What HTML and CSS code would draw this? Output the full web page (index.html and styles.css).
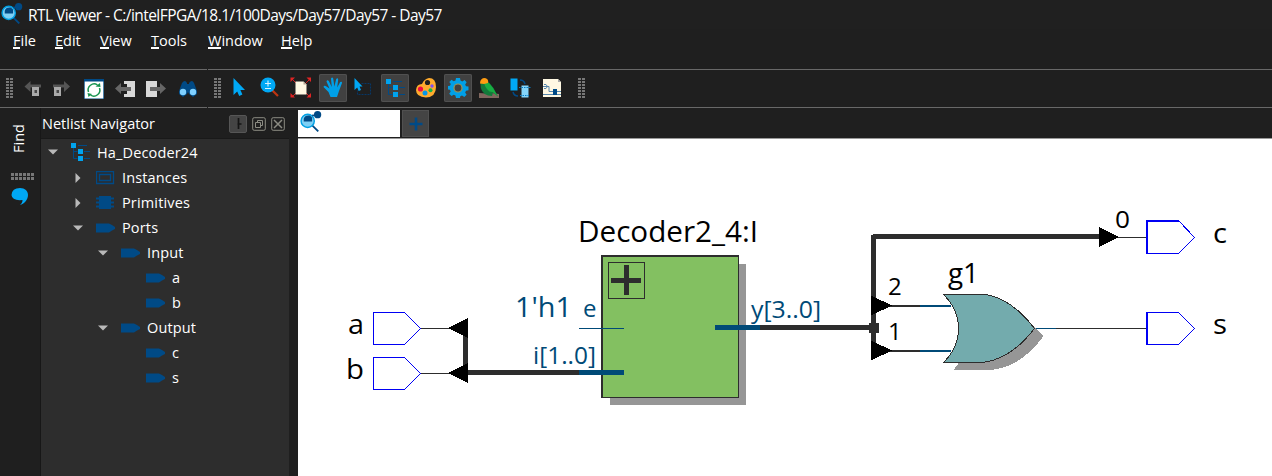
FILE: index.html
```
<!DOCTYPE html>
<html lang="en">
<head>
<meta charset="utf-8">
<title>RTL Viewer</title>
<link rel="stylesheet" href="styles.css">
</head>
<body>
<svg class="defs" width="0" height="0">
  <defs>
    <symbol id="viewer" viewBox="0 0 20 20">
      <path d="M11.5 13.5l4.500 4.500" stroke="#004a86" stroke-width="1.700" stroke-linecap="square"/>
      <circle cx="7" cy="9" r="6" fill="#7fd0f5" stroke="#00a0e4" stroke-width="1.300"/>
      <path d="M3.400 9.600V7q1-3 4-3h1.600l2 2v3.600z" fill="#004a86"/>
      <path d="M11 4h4" stroke="#004a86" stroke-width="1.500"/>
      <circle cx="16" cy="3.400" r="3.300" fill="#004a86"/>
    </symbol>
    <symbol id="port" viewBox="0 0 20 10"><path d="M0 .5h13l3 1.500 3 2v2l-3 1.500-3 2H0z" fill="#004a86"/></symbol>
    <symbol id="tree" viewBox="0 0 20 18">
      <path d="M2.500 5v10.500h4M2.500 8.500h4M7 2.500h9M13 8.500h6M13 15.500h6" fill="none" stroke="#004a86"/>
      <path d="M0 0h5v5H0zM7 6h5v5H7zM7 13h5v5H7z" fill="#00a3ee"/>
    </symbol>
    <symbol id="down" viewBox="0 0 10 6"><path d="M0 .5h10L5 5.500z" fill="#b9b9b9"/></symbol>
    <symbol id="right" viewBox="0 0 6 10"><path d="M.5 0v10l5-5z" fill="#b9b9b9"/></symbol>
  </defs>
</svg>
<div class="app">
  <header class="titlebar">
    <svg class="logo" width="22" height="22"><use href="#viewer"/></svg>
    <span class="title">RTL Viewer - C:/intelFPGA/18.1/100Days/Day57/Day57 - Day57</span>
  </header>
  <nav class="menu">
    <span class="m-file"><u>F</u>ile</span><span class="m-edit"><u>E</u>dit</span><span class="m-view"><u>V</u>iew</span><span class="m-tools"><u>T</u>ools</span><span class="m-window"><u>W</u>indow</span><span class="m-help"><u>H</u>elp</span>
  </nav>
  <div class="toolbar">
    <div class="bar nav-bar">
      <i class="grip"></i>
      <div class="nav-icons">
        <svg width="20" height="20" viewBox="0 0 20 20"><path d="M.5 7.500l6-5.500v3.500H17v3H6.500V13z" fill="#555"/><path d="M8 8h7v9H8z" fill="#aaa"/><path d="M10.500 11h2.500v3h-2.500z" fill="#484848"/></svg>
        <svg width="20" height="20" viewBox="0 0 20 20"><path d="M18 7.500L12 2v3.500H1v3h11V13z" fill="#555"/><path d="M2 8h7v9H2z" fill="#aaa"/><path d="M4.500 11H7v3H4.500z" fill="#484848"/></svg>
        <svg width="20" height="20" viewBox="0 0 20 20"><path d="M0 0h20v20H0z" fill="#004a86"/><path d="M.7 2.500h18.600v17H.7z" fill="#fff"/><path d="M4.500 13a6 6 0 0 1 9-7M15.500 9a6 6 0 0 1-9 7" fill="none" stroke="#17934f" stroke-width="1.500"/><path d="M11.500 7.500l5 .5-.5-4zM3.500 14l1 4 3.500-3z" fill="#17934f"/></svg>
        <svg width="20" height="20" viewBox="0 0 20 20"><path d="M9 2h11v16H9v-3h3V5H9z" fill="#d8d8d8"/><path d="M0 9.500L6 4v4h10v4H6v3z" fill="#666"/></svg>
        <svg width="20" height="20" viewBox="0 0 20 20"><path d="M0 2h11v3H6v8h5v5H0z" fill="#d8d8d8"/><path d="M4 5h7v3H4zM4 12h7v2H4z" fill="#d8d8d8"/><path d="M20 9.500L14 4v4H4v4h10v3z" fill="#666"/></svg>
        <svg width="20" height="20" viewBox="0 0 20 20"><path d="M1 12l3-8q3-4 5 0v1h2V4q3-4 5 0l3 8v3l-4 3-4-3-1-2-1 2-4 3-4-3z" fill="#004a86"/><circle cx="5" cy="13" r="3.200" fill="#7fd0ff"/><circle cx="15" cy="13" r="3.200" fill="#7fd0ff"/></svg>
      </div>
    </div>
    <div class="bar tool-bar">
      <i class="grip"></i>
      <div class="tools">
        <span class="tool"><svg width="28" height="28" viewBox="0 0 28 28"><path d="M8.500 4v17l3.700-3.500 2 4.500 3.200-1.500-2-4.500H20z" fill="#00a8f5"/></svg></span>
        <span class="tool"><svg width="28" height="28" viewBox="0 0 28 28"><path d="M15.500 15.500l6.500 6.500" stroke="#bd3512" stroke-width="2.200"/><circle cx="12" cy="11" r="7.500" fill="#00a8f5"/><path d="M9 9.500h6M12 6.500v6M9 14.500h6" stroke="#d7f2ff" stroke-width="1.100"/></svg></span>
        <span class="tool"><svg width="28" height="28" viewBox="0 0 28 28"><path d="M5 5l18 18M23 5L5 23" stroke="#d82020"/><path d="M3.500 3.500h4.500l-4.500 4.500zM24 3.500h-4.500L24 8zM3.500 23.500h4.500l-4.500-4.500zM24 23.500h-4.500L24 19z" fill="#e02424"/><path d="M8.500 7.500h8l3 3v10h-11z" fill="#fff8e3"/><path d="M16.500 7.500v3h3z" fill="#b4aa97"/></svg></span>
        <span class="tool on"><svg width="28" height="28" viewBox="0 0 28 28"><path d="M11.500 23l-2-5-5-5q.5-2 3-.5l3 2-3-7q.6-2.200 2.300-.5l3 6-.8-8.500q1.200-2 2.200 0l1.200 8L17.200 5q1.500-1.500 2 .5l-1 8 3-5.500q2-1 1.800 1l-3 8-2 6z" fill="#00a0e8"/></svg></span>
        <span class="tool"><svg width="28" height="28" viewBox="0 0 28 28"><path d="M11.500 9.500h9v11h-13v-4" fill="none" stroke="#073766" stroke-width="1.100" stroke-dasharray="2 1"/><path d="M4.500 4v12l2.700-2.500 1.500 3.500 2.300-1-1.500-3.500h3z" fill="#00a8f5"/></svg></span>
        <span class="tool on"><svg width="28" height="28" viewBox="0 0 28 28"><use href="#tree" x="5" y="5" width="20" height="18"/></svg></span>
        <span class="tool"><svg width="28" height="28" viewBox="0 0 28 28"><path d="M4 16q.5-6 6-6 2-5 7-6 7 0 7 9 0 10-10 10.500Q4 23 4 16z" fill="#ffab2d"/><circle cx="15.500" cy="8.500" r="2.600" fill="#202020"/><circle cx="8.500" cy="15" r="2.600" fill="#f00b45"/><circle cx="13" cy="19" r="2.500" fill="#0596e8"/><circle cx="18.500" cy="16.300" r="2" fill="#16b24b"/><circle cx="20" cy="12" r="1.700" fill="#8050f0"/></svg></span>
        <span class="tool on"><svg width="28" height="28" viewBox="0 0 28 28"><path d="M12 4h4l.5 2.600 1.800.8L20.600 6l2 2.200-1.400 2.200.8 1.800 2.500.4v3.600l-2.500.5-.8 1.800 1.400 2.200-2.300 2.300-2.300-1.500-1.700.7L16 24h-4l-.6-2.500-1.700-.7L7.500 22l-2.300-2.300 1.500-2.200-.8-1.800L4 15.500V12l2-.2.800-1.800L5.300 8 7.500 5.700l2.200 1.500 1.800-.8z" fill="#00a0e8"/><circle cx="14" cy="14" r="4" fill="#414141" stroke="#9b9558" stroke-width="1.200"/></svg></span>
        <span class="tool"><svg width="28" height="28" viewBox="0 0 28 28"><path d="M4 19l7 .5 6-.5 7 1v4H4z" fill="#80675e"/><path d="M5.500 9l4-2 5 2 4 5 4.500 8.500-5-4-1 3.500-4-.5Q5 19 5.500 9z" fill="#137a3a"/><path d="M9 9l4-1 5 6 4.500 8-5-4-3-.5q-4-3-5.500-8.500z" fill="#18ae42"/><path d="M5 9.500q0-5.500 5-5.500 4 1 3 5l-4 1z" fill="#ff9c11"/></svg></span>
        <span class="tool"><svg width="28" height="28" viewBox="0 0 28 28"><path d="M4.500 4.500h7v12h-7z" fill="#00a8f5"/><path d="M15.500 11.500h7v12h-7z" fill="#85d5fa"/><path d="M14 6q4 0 5 4M7 18q1 4 5 4" fill="none" stroke="#004a86" stroke-width="1.500"/><path d="M13 13.500h12M14 21.500h10" stroke="#087dc5" stroke-dasharray="1.500 1"/></svg></span>
        <span class="tool"><svg width="28" height="28" viewBox="0 0 28 28"><path d="M5 5h15l3 3v15H5z" fill="#fff8e3"/><path d="M20 5v3h3z" fill="#aaa"/><path d="M5 12.500h6v5h5M5 20.500h18M19 17.500h4" fill="none" stroke="#5686ad"/><path d="M6 10.500h2l1.500 2-1.500 2H6" fill="none" stroke="#5686ad"/><path d="M15 15h4v6h-4z" fill="#004a86"/></svg></span>
      </div>
      <i class="grip"></i>
    </div>
  </div>
  <div class="main">
    <aside class="strip">
      <div class="find">Find</div>
      <i class="hgrip"></i>
      <svg width="18" height="18" viewBox="0 0 18 18"><path d="M9 0c5 0 8 3 8 7 0 5-4 9-8 10 2-2 2.500-3 2.500-5Q1 13 .5 7 1 0 9 0z" fill="#00a8f5"/></svg>
    </aside>
    <section class="navigator">
      <div class="nav-head"><span>Netlist Navigator</span>
        <div class="head-icons">
          <svg width="18" height="18" viewBox="0 0 18 18"><rect x=".5" y=".5" width="17" height="17" rx="1.500" fill="#444" stroke="#565656"/><path d="M9.500 3v6m-1 0h4M9.500 9v5" stroke="#151515" stroke-width="1.700"/></svg>
          <svg width="14" height="14" viewBox="0 0 14 14" fill="none" stroke="#8c8c83"><rect x=".7" y=".7" width="12.600" height="12.600" rx="1.500"/><path d="M5.500 5V3.500h5v5H9M3.500 5.500h5v5h-5z"/></svg>
          <svg width="14" height="14" viewBox="0 0 14 14" fill="none" stroke="#8c8c83"><rect x=".7" y=".7" width="12.600" height="12.600" rx="1.500"/><path d="M3 3l8 8M11 3l-8 8" stroke-width="1.500"/></svg>
        </div>
      </div>
      <div class="rows">
        <div class="row l0"><svg class="arrow" width="10" height="6"><use href="#down"/></svg><svg class="ico" width="20" height="18"><use href="#tree"/></svg><span>Ha_Decoder24</span></div>
        <div class="row l1"><svg class="arrow" width="6" height="10"><use href="#right"/></svg><svg class="ico" width="20" height="14" viewBox="0 0 20 14" fill="none" stroke="#004a86"><path d="M.5.500h17v12H.5zM3.500 3.500h11v6h-11z" stroke-width="1.300"/></svg><span>Instances</span></div>
        <div class="row l1"><svg class="arrow" width="6" height="10"><use href="#right"/></svg><svg class="ico" width="20" height="14" viewBox="0 0 20 14"><path d="M3 0h12v13H3z" fill="#004a86"/><path d="M0 2.500h18M0 6.500h18M0 10.500h18" stroke="#004a86" stroke-width="2"/></svg><span>Primitives</span></div>
        <div class="row l1"><svg class="arrow" width="10" height="6"><use href="#down"/></svg><svg class="ico" width="20" height="10"><use href="#port"/></svg><span>Ports</span></div>
        <div class="row l2"><svg class="arrow" width="10" height="6"><use href="#down"/></svg><svg class="ico" width="20" height="10"><use href="#port"/></svg><span>Input</span></div>
        <div class="row l3"><i class="arrow"></i><svg class="ico" width="20" height="10"><use href="#port"/></svg><span>a</span></div>
        <div class="row l3"><i class="arrow"></i><svg class="ico" width="20" height="10"><use href="#port"/></svg><span>b</span></div>
        <div class="row l2"><svg class="arrow" width="10" height="6"><use href="#down"/></svg><svg class="ico" width="20" height="10"><use href="#port"/></svg><span>Output</span></div>
        <div class="row l3"><i class="arrow"></i><svg class="ico" width="20" height="10"><use href="#port"/></svg><span>c</span></div>
        <div class="row l3"><i class="arrow"></i><svg class="ico" width="20" height="10"><use href="#port"/></svg><span>s</span></div>
      </div>
    </section>
    <section class="view">
      <div class="tabs">
        <div class="tab"><svg width="22" height="22"><use href="#viewer"/></svg></div>
        <div class="add"><svg width="14" height="14" viewBox="0 0 14 14"><path d="M7 .5v13M.5 7h13" stroke="#004a86" stroke-width="2.600"/></svg></div>
      </div>
      <svg class="schematic" width="974" height="337" viewBox="298 139 974 337">
        <g shape-rendering="crispEdges">
          <path d="M610 264h136v141H610z" fill="#969696"/>
          <path d="M601 255h138v143H601z" fill="#2d2d2d"/>
          <path d="M603 257h135v140H603z" fill="#83c061"/>
          <path d="M608.500 262.500h36v36h-36z" fill="none" stroke="#2d2d2d"/>
          <path d="M624 265h5v13h12v5h-12v12h-5v-12h-13v-5h13z" fill="#2d2d2d"/>
          <g fill="#2d2d2d">
            <path d="M463 328h5v45h-5zM468 370h111v5H468zM760 325h113v5H760zM871 235h5v115h-5zM873 234h227v5H873zM869 323h10v10h-10z"/>
            <path d="M420 328h30v1h-30zM420 373h30v1h-30zM1117 237h30v1h-30zM890 305h31v2h-31zM890 350h31v2h-31zM1055 328h92v1h-92z"/>
          </g>
          <path d="M579 328h45v1h-45zM579 370h45v5h-45zM715 325h45v5h-45zM920 305h31v2h-31zM920 350h31v2h-31zM1034 328h22v1h-22z" fill="#004a77"/>
          <path d="M448 328l20-10v20zM448 373l20-10v20zM1119 237l-20-10v20zM892 305.500l-21-10v20zM892 350.500l-21-10v20z" fill="#000"/>
          <g fill="none" stroke="#0000f4">
            <path d="M373.500 312.500h31l16 16-16 16h-31zM373.500 357.500h31l16 16-16 16h-31z"/>
            <path d="M1146.500 220.500h32l16 17-16 16h-32zM1146.500 312.500h32l16 16-16 16h-32z"/>
            <path d="M1147.500 253v-31.500h31M1147.500 345v-32"/>
          </g>
          <path d="M953.500 370c10-12 13-22 10-36l-8-30h33q32 5 55 32-24 33-55 34z" fill="#969696"/>
          <path d="M943.500 294.500h42q26 4 49 34-24 31-52 34h-39c20-20 20-48 0-68z" fill="#73abad" stroke="#2d2d2d"/>
        </g>
        <g class="labels">
          <text x="578" y="242" font-size="29" textLength="180" lengthAdjust="spacingAndGlyphs">Decoder2_4:I</text>
          <text x="948" y="283" font-size="27" textLength="31" lengthAdjust="spacingAndGlyphs">g1</text>
          <text x="348" y="334" font-size="27" textLength="16" lengthAdjust="spacingAndGlyphs">a</text>
          <text x="346" y="379" font-size="27" textLength="18" lengthAdjust="spacingAndGlyphs">b</text>
          <text x="1213" y="243" font-size="27" textLength="14" lengthAdjust="spacingAndGlyphs">c</text>
          <text x="1213" y="334" font-size="27" textLength="14" lengthAdjust="spacingAndGlyphs">s</text>
          <text x="888" y="295" font-size="24">2</text>
          <text x="888" y="340" font-size="24">1</text>
          <text x="1115" y="228" font-size="24" textLength="15" lengthAdjust="spacingAndGlyphs">0</text>
          <g fill="#004a77">
            <text x="515" y="317" font-size="28" textLength="57" lengthAdjust="spacingAndGlyphs">1'h1</text>
            <text x="583" y="317" font-size="24">e</text>
            <text x="533" y="364" font-size="24" textLength="63" lengthAdjust="spacingAndGlyphs">i[1..0]</text>
            <text x="751" y="318" font-size="24" textLength="70" lengthAdjust="spacingAndGlyphs">y[3..0]</text>
          </g>
        </g>
      </svg>
    </section>
  </div>
</div>
</body>
</html>
```
FILE: styles.css
```
* { box-sizing: border-box; }
body { margin: 0; background: #1f1f1f; color: #fff; font-family: "Open Sans", "Noto Sans", sans-serif; font-size: 14.500px; overflow: hidden; }
svg { display: block; flex: none; }
.defs { position: absolute; }
.app { width: 1272px; height: 476px; display: flex; flex-direction: column; }
.titlebar { height: 29px; display: flex; align-items: center; padding-left: 1px; background: #202020; }
.logo { margin: 0 5px 2px 0; }
.title { font-size: 15.500px; letter-spacing: -0.550px; white-space: nowrap; }
.menu { height: 40px; display: flex; padding: 2px 0 0 13px; line-height: 20px; }
.menu u { text-decoration: none; display: inline-block; height: 18px; border-bottom: 2px solid #fff; line-height: 20px; }
.m-file { width: 42px; }
.m-edit { width: 45px; }
.m-view { width: 51px; }
.m-tools { width: 57px; }
.m-window { width: 73px; }
.toolbar { height: 39px; display: flex; gap: 1px; }
.bar { display: flex; align-items: center; border-top: 1px solid #686868; border-bottom: 1px solid #686868; }
.nav-bar { width: 207px; padding-left: 6px; }
.tool-bar { flex: 1; padding-left: 6px; }
.grip { width: 7px; height: 21px; background: repeating-linear-gradient(#0000 0 2px, #1f1f1f 2px 3px), linear-gradient(90deg, #777 0 3px, #0000 3px 4px, #777 4px 7px); }
.nav-icons { display: grid; grid-template-columns: 28px 32px 31px 31px 32px 20px; margin-left: 11px; }
.tools { display: flex; gap: 3.300px; margin: 0 12px 1px 3.700px; }
.tool { width: 28px; height: 28px; flex: none; }
.on { background: #414141; border-radius: 2px; box-shadow: inset 0 0 0 1px #505050; }
.main { height: 368px; display: flex; }
.strip { width: 41px; border-right: 1px solid #171717; display: flex; flex-direction: column; align-items: center; }
.find { height: 65px; width: 38px; writing-mode: vertical-rl; transform: rotate(180deg); line-height: 36px; padding-top: 20px; }
.hgrip { width: 23px; height: 7px; background: repeating-linear-gradient(90deg, #0000 0 3px, #1f1f1f 3px 4px), linear-gradient(#777 0 3px, #0000 3px 4px, #777 4px 7px); margin: 0 0 8px 4px; }
.navigator { width: 248px; }
.nav-head { height: 32px; display: flex; align-items: center; justify-content: space-between; padding: 0 4px 0 1px; border-bottom: 2px solid #191919; }
.head-icons { display: flex; align-items: center; gap: 5px; padding-top: 2px; }
.rows { height: 336px; background: #2d2d2d; }
.row { height: 25px; display: flex; align-items: center; position: static; }
.arrow { width: 10px; margin-right: 13px; flex: none; }
.ico { margin-right: 6px; }
.row:first-child { height: 26px; }
.rows { margin-top: -1px; height: 337px; }
.row span { letter-spacing: 0.150px; }
.l0 { padding-left: 7px; }
.l1 { padding-left: 32px; }
.l2 { padding-left: 57px; }
.l3 { padding-left: 82px; }
.view { width: 974px; margin-left: 9px; }
.tabs { height: 31px; padding-top: 2px; display: flex; border-bottom: 1px solid #999; }
.tab { width: 102px; height: 27px; background: #fff; padding: 1px 2px; }
.add { width: 27px; height: 27px; margin-left: 2px; background: #444; border: 1px solid #505050; display: flex; align-items: center; justify-content: center; }
.schematic { background: #fff; }
.labels { font-family: "Open Sans", "Noto Sans", sans-serif; }
```
